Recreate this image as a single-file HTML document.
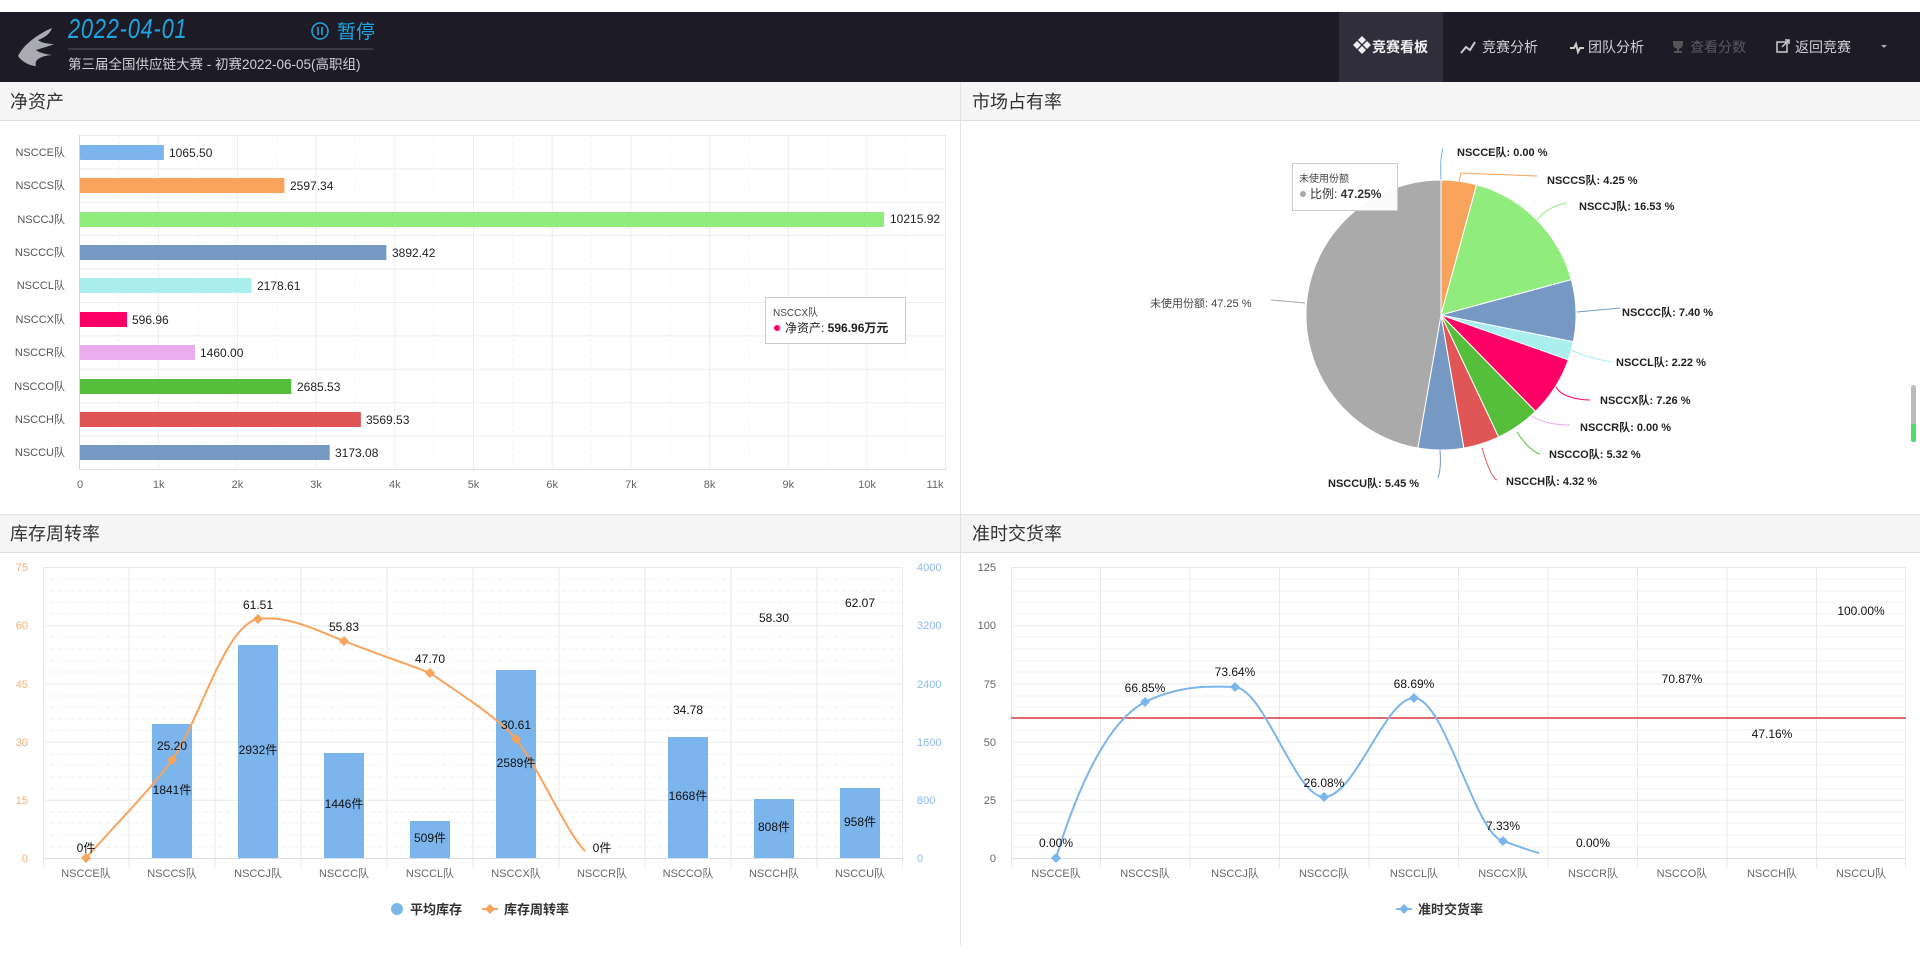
<!DOCTYPE html>
<html><head><meta charset="utf-8"><style>
html,body{margin:0;padding:0;width:1920px;height:960px;overflow:hidden;background:#fff;font-family:"Liberation Sans Narrow","Liberation Sans","Noto Sans CJK SC",sans-serif}
svg{position:absolute;left:0;top:0}
text{font-family:"Liberation Sans Narrow","Liberation Sans","Noto Sans CJK SC",sans-serif}
</style></head><body>
<svg width="1920" height="960" viewBox="0 0 1920 960" xmlns="http://www.w3.org/2000/svg">
<!-- header -->
<rect x="0" y="12" width="1920" height="70" fill="#1d1b26"/>
<path d="M52,28 C38,34 24,44 18,56 C22,62 30,66 36,66 C34,60 40,56 52,55 C44,54 38,52 36,50 C42,48 50,46 54,44 C46,44 40,42 38,40 C44,38 50,34 52,28Z" fill="#a9abb0"/>
<text x="68" y="38" font-size="28" font-style="italic" fill="#1ea5e0" transform="translate(68,0) scale(0.78,1) translate(-68,0)" letter-spacing="1">2022-04-01</text>
<circle cx="320" cy="31" r="8" fill="none" stroke="#1ea5e0" stroke-width="1.5"/>
<line x1="318" y1="27" x2="318" y2="35" stroke="#1ea5e0" stroke-width="1.5"/><line x1="322" y1="27" x2="322" y2="35" stroke="#1ea5e0" stroke-width="1.5"/>
<text x="337" y="38" font-size="19" fill="#1ea5e0">暂停</text>
<line x1="68" y1="49" x2="373" y2="49" stroke="#55545c" stroke-width="1"/>
<text x="68" y="69" font-size="13.5" fill="#cfcfd4">第三届全国供应链大赛 - 初赛2022-06-05(高职组)</text>
<rect x="1339" y="12" width="104" height="70" fill="#302e3a"/>
<g font-size="14" font-weight="bold">
<path d="M1358,41 l4,-4 l4,4 l-4,4z M1353,46 l4,-4 l4,4 l-4,4z M1363,46 l4,-4 l4,4 l-4,4z M1358,51 l4,-4 l4,4 l-4,4z" fill="#eee" transform="translate(0,-1) scale(1)"/>
<text x="1372" y="52" fill="#f2f2f2">竞赛看板</text>
<path d="M1461,53 l5,-6 l4,3 l5,-8" fill="none" stroke="#ccc" stroke-width="2"/>
<text x="1482" y="52" fill="#d0d0d4" font-weight="normal">竞赛分析</text>
<path d="M1570,48 l4,0 l2,-4 l2,8 l2,-4 l4,0" fill="none" stroke="#ccc" stroke-width="2"/>
<text x="1588" y="52" fill="#d0d0d4" font-weight="normal">团队分析</text>
<path d="M1673,41 h10 v3 a5,5 0 0 1 -10,0z M1677,48 h2 v3 h3 v2 h-8 v-2 h3z" fill="#555"/>
<text x="1690" y="52" fill="#5a5a60" font-weight="normal">查看分数</text>
<rect x="1777" y="42" width="10" height="10" fill="none" stroke="#ccc" stroke-width="1.5"/><path d="M1782,47 l7,-7 M1785,40 h4 v4" stroke="#ccc" stroke-width="1.5" fill="none"/>
<text x="1795" y="52" fill="#d0d0d4" font-weight="normal">返回竞赛</text>
<path d="M1881,45 h6 l-3,3z" fill="#aaa"/>
</g>
<!-- panel title bars -->
<rect x="0" y="82" width="1920" height="38" fill="#f5f5f5"/>
<line x1="0" y1="120.5" x2="1920" y2="120.5" stroke="#dcdcdc"/>
<rect x="0" y="514" width="1920" height="38" fill="#f5f5f5"/>
<line x1="0" y1="514.5" x2="1920" y2="514.5" stroke="#e2e2e2"/>
<line x1="0" y1="552.5" x2="1920" y2="552.5" stroke="#dcdcdc"/>
<line x1="960.5" y1="82" x2="960.5" y2="945" stroke="#e2e2e2"/>
<g font-size="18" fill="#333">
<text x="10" y="108">净资产</text><text x="972" y="108">市场占有率</text>
<text x="10" y="540">库存周转率</text><text x="972" y="540">准时交货率</text>
</g>
<!-- bar chart -->
<g stroke="#ececec" stroke-width="1">
<line x1="80" y1="135.5" x2="946" y2="135.5"/><line x1="80" y1="168.9" x2="946" y2="168.9"/><line x1="80" y1="202.3" x2="946" y2="202.3"/><line x1="80" y1="235.7" x2="946" y2="235.7"/><line x1="80" y1="269.1" x2="946" y2="269.1"/><line x1="80" y1="302.5" x2="946" y2="302.5"/><line x1="80" y1="335.9" x2="946" y2="335.9"/><line x1="80" y1="369.3" x2="946" y2="369.3"/><line x1="80" y1="402.7" x2="946" y2="402.7"/><line x1="80" y1="436.1" x2="946" y2="436.1"/>
<line x1="158.7" y1="135" x2="158.7" y2="469"/><line x1="237.4" y1="135" x2="237.4" y2="469"/><line x1="316.1" y1="135" x2="316.1" y2="469"/><line x1="394.8" y1="135" x2="394.8" y2="469"/><line x1="473.5" y1="135" x2="473.5" y2="469"/><line x1="552.2" y1="135" x2="552.2" y2="469"/><line x1="630.9" y1="135" x2="630.9" y2="469"/><line x1="709.6" y1="135" x2="709.6" y2="469"/><line x1="788.3" y1="135" x2="788.3" y2="469"/><line x1="867" y1="135" x2="867" y2="469"/><line x1="945.5" y1="135" x2="945.5" y2="469"/>
</g>
<g stroke="#f4f4f4" stroke-dasharray="3,3">
<line x1="119" y1="135" x2="119" y2="469"/><line x1="198" y1="135" x2="198" y2="469"/><line x1="277" y1="135" x2="277" y2="469"/><line x1="355" y1="135" x2="355" y2="469"/><line x1="434" y1="135" x2="434" y2="469"/><line x1="513" y1="135" x2="513" y2="469"/><line x1="591" y1="135" x2="591" y2="469"/><line x1="670" y1="135" x2="670" y2="469"/><line x1="749" y1="135" x2="749" y2="469"/><line x1="828" y1="135" x2="828" y2="469"/><line x1="906" y1="135" x2="906" y2="469"/>
</g>
<line x1="79.5" y1="135" x2="79.5" y2="470" stroke="#c8d8ee"/>
<line x1="79" y1="469.5" x2="946" y2="469.5" stroke="#dde"/>
<g>
<rect x="80" y="145" width="83.9" height="15" fill="#7cb5ec" rx="1"/>
<rect x="80" y="178" width="204.4" height="15" fill="#f7a35c"/>
<rect x="80" y="212" width="804" height="15" fill="#90ed7d"/>
<rect x="80" y="245" width="306.3" height="15" fill="#7599c2"/>
<rect x="80" y="278" width="171.5" height="15" fill="#abeeee"/>
<rect x="80" y="312" width="47" height="15" fill="#ff0066"/>
<rect x="80" y="345" width="114.9" height="15" fill="#eaacee"/>
<rect x="80" y="379" width="211.3" height="15" fill="#55bf3b"/>
<rect x="80" y="412" width="280.9" height="15" fill="#e05656"/>
<rect x="80" y="445" width="249.7" height="15" fill="#7599c2"/>
</g>
<g font-size="12" fill="#222">
<text x="169" y="157">1065.50</text><text x="290" y="190">2597.34</text><text x="890" y="223">10215.92</text><text x="392" y="257">3892.42</text><text x="257" y="290">2178.61</text><text x="132" y="324">596.96</text><text x="200" y="357">1460.00</text><text x="297" y="391">2685.53</text><text x="366" y="424">3569.53</text><text x="335" y="457">3173.08</text>
</g>
<g font-size="11" fill="#555" text-anchor="end">
<text x="65" y="156">NSCCE队</text><text x="65" y="189">NSCCS队</text><text x="65" y="223">NSCCJ队</text><text x="65" y="256">NSCCC队</text><text x="65" y="289">NSCCL队</text><text x="65" y="323">NSCCX队</text><text x="65" y="356">NSCCR队</text><text x="65" y="390">NSCCO队</text><text x="65" y="423">NSCCH队</text><text x="65" y="456">NSCCU队</text>
</g>
<g font-size="11" fill="#666" text-anchor="middle">
<text x="80" y="488">0</text><text x="158.7" y="488">1k</text><text x="237.4" y="488">2k</text><text x="316.1" y="488">3k</text><text x="394.8" y="488">4k</text><text x="473.5" y="488">5k</text><text x="552.2" y="488">6k</text><text x="630.9" y="488">7k</text><text x="709.6" y="488">8k</text><text x="788.3" y="488">9k</text><text x="867" y="488">10k</text><text x="935" y="488">11k</text>
</g>
<rect x="765.5" y="297.5" width="140" height="46" fill="#fff" fill-opacity="0.92" stroke="#ccc"/>
<text x="773" y="316" font-size="10" fill="#444">NSCCX队</text>
<circle cx="777" cy="328" r="3" fill="#ff0066"/>
<text x="785" y="332" font-size="12" fill="#222">净资产: <tspan font-weight="bold">596.96万元</tspan></text>
<!-- pie -->
<g stroke="#fff" stroke-width="1">
<path d="M1441,315 L1441,180 A135,135 0 0 1 1476.6,184.8Z" fill="#f7a35c"/>
<path d="M1441,315 L1476.6,184.8 A135,135 0 0 1 1571.3,279.6Z" fill="#90ed7d"/>
<path d="M1441,315 L1571.3,279.6 A135,135 0 0 1 1573.3,341.8Z" fill="#7599c2"/>
<path d="M1441,315 L1573.3,341.8 A135,135 0 0 1 1568.3,359.9Z" fill="#abeeee"/>
<path d="M1441,315 L1568.3,359.9 A135,135 0 0 1 1535.5,411.4Z" fill="#ff0066"/>
<path d="M1441,315 L1535.5,411.4 A135,135 0 0 1 1498.6,437.1Z" fill="#55bf3b"/>
<path d="M1441,315 L1498.6,437.1 A135,135 0 0 1 1463.8,448.1Z" fill="#e05656"/>
<path d="M1441,315 L1463.8,448.1 A135,135 0 0 1 1417.8,448Z" fill="#7599c2"/>
<path d="M1441,315 L1417.8,448 A135,135 0 0 1 1441,180Z" fill="#aaaaaa"/>
</g>
<g fill="none" stroke-width="1">
<path d="M1441,180 C1440,165 1441,155 1443,148" stroke="#7cb5ec"/>
<path d="M1459,182 L1461,173 L1537,176" stroke="#f7a35c"/>
<path d="M1537,220 C1545,210 1555,205 1567,203" stroke="#90ed7d"/>
<path d="M1577,312 L1620,308" stroke="#7599c2"/>
<path d="M1571,350 C1585,357 1600,360 1612,362" stroke="#abeeee"/>
<path d="M1556,387 C1560,395 1575,400 1590,400" stroke="#ff0066"/>
<path d="M1532,416 C1540,422 1555,425 1570,425" stroke="#eaacee"/>
<path d="M1517,432 C1525,445 1535,453 1540,454" stroke="#55bf3b"/>
<path d="M1482,448 C1487,465 1492,478 1497,480" stroke="#e05656"/>
<path d="M1440,450 C1441,462 1440,472 1438,478" stroke="#7599c2"/>
<path d="M1271,300 L1305,303" stroke="#aaa"/>
</g>
<g font-size="11" fill="#222" font-weight="bold">
<text x="1457" y="156">NSCCE队: 0.00 %</text>
<text x="1547" y="184">NSCCS队: 4.25 %</text>
<text x="1579" y="210">NSCCJ队: 16.53 %</text>
<text x="1622" y="316">NSCCC队: 7.40 %</text>
<text x="1616" y="366">NSCCL队: 2.22 %</text>
<text x="1600" y="404">NSCCX队: 7.26 %</text>
<text x="1580" y="431">NSCCR队: 0.00 %</text>
<text x="1549" y="458">NSCCO队: 5.32 %</text>
<text x="1506" y="485">NSCCH队: 4.32 %</text>
<text x="1328" y="487">NSCCU队: 5.45 %</text>
<text x="1150" y="307" font-weight="normal" fill="#444">未使用份额: 47.25 %</text>
</g>
<rect x="1292.5" y="163.5" width="105" height="47" fill="#fff" fill-opacity="0.94" stroke="#ccc"/>
<text x="1299" y="182" font-size="10" fill="#444">未使用份额</text>
<circle cx="1303" cy="194" r="3" fill="#aaa"/>
<text x="1310" y="198" font-size="12" fill="#333">比例: <tspan font-weight="bold">47.25%</tspan></text>
<rect x="1911" y="385" width="5" height="57" rx="2.5" fill="#bbb"/>
<rect x="1911" y="424" width="5" height="18" rx="2" fill="#49e06a"/>
<!-- bottom-left chart grid -->
<g stroke="#e9e9e9">
<line x1="43" y1="567.5" x2="903" y2="567.5"/><line x1="43" y1="625.7" x2="903" y2="625.7"/><line x1="43" y1="683.9" x2="903" y2="683.9"/><line x1="43" y1="742.1" x2="903" y2="742.1"/><line x1="43" y1="800.3" x2="903" y2="800.3"/>
<line x1="43.5" y1="567" x2="43.5" y2="868"/><line x1="129" y1="567" x2="129" y2="868"/><line x1="215" y1="567" x2="215" y2="868"/><line x1="301" y1="567" x2="301" y2="868"/><line x1="387" y1="567" x2="387" y2="868"/><line x1="473" y1="567" x2="473" y2="868"/><line x1="559" y1="567" x2="559" y2="868"/><line x1="645" y1="567" x2="645" y2="868"/><line x1="731" y1="567" x2="731" y2="868"/><line x1="817" y1="567" x2="817" y2="868"/><line x1="902.5" y1="567" x2="902.5" y2="868"/>
</g>
<g stroke="#f0f0f0" stroke-dasharray="4,3">
<line x1="43" y1="579" x2="903" y2="579"/><line x1="43" y1="591" x2="903" y2="591"/><line x1="43" y1="602" x2="903" y2="602"/><line x1="43" y1="614" x2="903" y2="614"/><line x1="43" y1="637" x2="903" y2="637"/><line x1="43" y1="649" x2="903" y2="649"/><line x1="43" y1="661" x2="903" y2="661"/><line x1="43" y1="672" x2="903" y2="672"/><line x1="43" y1="696" x2="903" y2="696"/><line x1="43" y1="707" x2="903" y2="707"/><line x1="43" y1="719" x2="903" y2="719"/><line x1="43" y1="730" x2="903" y2="730"/><line x1="43" y1="754" x2="903" y2="754"/><line x1="43" y1="765" x2="903" y2="765"/><line x1="43" y1="777" x2="903" y2="777"/><line x1="43" y1="789" x2="903" y2="789"/><line x1="43" y1="812" x2="903" y2="812"/><line x1="43" y1="823" x2="903" y2="823"/><line x1="43" y1="835" x2="903" y2="835"/><line x1="43" y1="847" x2="903" y2="847"/>
</g>
<line x1="43" y1="858.5" x2="903" y2="858.5" stroke="#d6dce8"/>
<g fill="#7cb5ec">
<rect x="152" y="724" width="40" height="134"/><rect x="238" y="645" width="40" height="213"/><rect x="324" y="753" width="40" height="105"/><rect x="410" y="821" width="40" height="37"/><rect x="496" y="670" width="40" height="188"/><rect x="668" y="737" width="40" height="121"/><rect x="754" y="799" width="40" height="59"/><rect x="840" y="788" width="40" height="70"/>
</g>
<path d="M86,858 C120,820 150,790 172,760 C200,720 225,625 258,619 C290,615 320,632 344,641 C380,655 410,665 430,673 C470,700 500,720 516,739 C540,770 565,830 585,851" fill="none" stroke="#f7a35c" stroke-width="2"/>
<g fill="#f7a35c"><path d="M86,853 l5,5 l-5,5 l-5,-5z"/><path d="M172,755 l5,5 l-5,5 l-5,-5z"/><path d="M258,614 l5,5 l-5,5 l-5,-5z"/><path d="M344,636 l5,5 l-5,5 l-5,-5z"/><path d="M430,668 l5,5 l-5,5 l-5,-5z"/><path d="M516,734 l5,5 l-5,5 l-5,-5z"/></g>
<g font-size="12" fill="#111" text-anchor="middle">
<text x="86" y="852">0件</text><text x="172" y="750">25.20</text><text x="258" y="609">61.51</text><text x="344" y="631">55.83</text><text x="430" y="663">47.70</text><text x="516" y="729">30.61</text><text x="602" y="852">0件</text><text x="688" y="714">34.78</text><text x="774" y="622">58.30</text><text x="860" y="607">62.07</text>
<text x="172" y="794">1841件</text><text x="258" y="754">2932件</text><text x="344" y="808">1446件</text><text x="430" y="842">509件</text><text x="516" y="767">2589件</text><text x="688" y="800">1668件</text><text x="774" y="831">808件</text><text x="860" y="826">958件</text>
</g>
<g font-size="11" fill="#f4b07a" text-anchor="end">
<text x="28" y="571">75</text><text x="28" y="629">60</text><text x="28" y="688">45</text><text x="28" y="746">30</text><text x="28" y="804">15</text><text x="28" y="862">0</text>
</g>
<g font-size="11" fill="#8cb8e8">
<text x="917" y="571">4000</text><text x="917" y="629">3200</text><text x="917" y="688">2400</text><text x="917" y="746">1600</text><text x="917" y="804">800</text><text x="917" y="862">0</text>
</g>
<g font-size="11" fill="#666" text-anchor="middle">
<text x="86" y="877">NSCCE队</text><text x="172" y="877">NSCCS队</text><text x="258" y="877">NSCCJ队</text><text x="344" y="877">NSCCC队</text><text x="430" y="877">NSCCL队</text><text x="516" y="877">NSCCX队</text><text x="602" y="877">NSCCR队</text><text x="688" y="877">NSCCO队</text><text x="774" y="877">NSCCH队</text><text x="860" y="877">NSCCU队</text>
</g>
<circle cx="397" cy="909" r="6" fill="#7cb5ec"/>
<text x="410" y="914" font-size="13" font-weight="bold" fill="#333">平均库存</text>
<line x1="482" y1="909" x2="498" y2="909" stroke="#f7a35c" stroke-width="2"/><path d="M490,904 l5,5 l-5,5 l-5,-5z" fill="#f7a35c"/>
<text x="504" y="914" font-size="13" font-weight="bold" fill="#333">库存周转率</text>
<!-- bottom-right chart -->
<g stroke="#e9e9e9">
<line x1="1011" y1="567.5" x2="1906" y2="567.5"/><line x1="1011" y1="625.7" x2="1906" y2="625.7"/><line x1="1011" y1="683.9" x2="1906" y2="683.9"/><line x1="1011" y1="742.1" x2="1906" y2="742.1"/><line x1="1011" y1="800.3" x2="1906" y2="800.3"/>
<line x1="1011.5" y1="567" x2="1011.5" y2="868"/><line x1="1100.5" y1="567" x2="1100.5" y2="868"/><line x1="1190" y1="567" x2="1190" y2="868"/><line x1="1279.5" y1="567" x2="1279.5" y2="868"/><line x1="1369" y1="567" x2="1369" y2="868"/><line x1="1458.5" y1="567" x2="1458.5" y2="868"/><line x1="1548" y1="567" x2="1548" y2="868"/><line x1="1637.5" y1="567" x2="1637.5" y2="868"/><line x1="1727" y1="567" x2="1727" y2="868"/><line x1="1816.5" y1="567" x2="1816.5" y2="868"/><line x1="1905.5" y1="567" x2="1905.5" y2="868"/>
</g>
<g stroke="#f0f0f0">
<line x1="1011" y1="579" x2="1906" y2="579"/><line x1="1011" y1="591" x2="1906" y2="591"/><line x1="1011" y1="602" x2="1906" y2="602"/><line x1="1011" y1="614" x2="1906" y2="614"/><line x1="1011" y1="637" x2="1906" y2="637"/><line x1="1011" y1="649" x2="1906" y2="649"/><line x1="1011" y1="661" x2="1906" y2="661"/><line x1="1011" y1="672" x2="1906" y2="672"/><line x1="1011" y1="696" x2="1906" y2="696"/><line x1="1011" y1="707" x2="1906" y2="707"/><line x1="1011" y1="730" x2="1906" y2="730"/><line x1="1011" y1="754" x2="1906" y2="754"/><line x1="1011" y1="765" x2="1906" y2="765"/><line x1="1011" y1="777" x2="1906" y2="777"/><line x1="1011" y1="789" x2="1906" y2="789"/><line x1="1011" y1="812" x2="1906" y2="812"/><line x1="1011" y1="823" x2="1906" y2="823"/><line x1="1011" y1="835" x2="1906" y2="835"/><line x1="1011" y1="847" x2="1906" y2="847"/>
</g>
<line x1="1011" y1="858.5" x2="1906" y2="858.5" stroke="#d6dce8"/>
<line x1="1011" y1="718" x2="1906" y2="718" stroke="#d9393d" stroke-width="1.5"/>
<path d="M1056,858 C1080,780 1110,720 1145,702 C1180,685 1210,686 1235,687 C1265,690 1295,797 1324,797 C1355,797 1385,698 1414,698 C1445,698 1475,835 1503,841 C1515,845 1530,851 1539,853" fill="none" stroke="#7cb5ec" stroke-width="2"/>
<g fill="#7cb5ec"><path d="M1056,853 l5,5 l-5,5 l-5,-5z"/><path d="M1145,697 l5,5 l-5,5 l-5,-5z"/><path d="M1235,682 l5,5 l-5,5 l-5,-5z"/><path d="M1324,792 l5,5 l-5,5 l-5,-5z"/><path d="M1414,693 l5,5 l-5,5 l-5,-5z"/><path d="M1503,836 l5,5 l-5,5 l-5,-5z"/></g>
<g font-size="12" fill="#111" text-anchor="middle">
<text x="1056" y="847">0.00%</text><text x="1145" y="692">66.85%</text><text x="1235" y="676">73.64%</text><text x="1324" y="787">26.08%</text><text x="1414" y="688">68.69%</text><text x="1503" y="830">7.33%</text><text x="1593" y="847">0.00%</text><text x="1682" y="683">70.87%</text><text x="1772" y="738">47.16%</text><text x="1861" y="615">100.00%</text>
</g>
<g font-size="11" fill="#666" text-anchor="end">
<text x="996" y="571">125</text><text x="996" y="629">100</text><text x="996" y="688">75</text><text x="996" y="746">50</text><text x="996" y="804">25</text><text x="996" y="862">0</text>
</g>
<g font-size="11" fill="#666" text-anchor="middle">
<text x="1056" y="877">NSCCE队</text><text x="1145" y="877">NSCCS队</text><text x="1235" y="877">NSCCJ队</text><text x="1324" y="877">NSCCC队</text><text x="1414" y="877">NSCCL队</text><text x="1503" y="877">NSCCX队</text><text x="1593" y="877">NSCCR队</text><text x="1682" y="877">NSCCO队</text><text x="1772" y="877">NSCCH队</text><text x="1861" y="877">NSCCU队</text>
</g>
<line x1="1396" y1="909" x2="1412" y2="909" stroke="#7cb5ec" stroke-width="2"/><path d="M1404,904 l5,5 l-5,5 l-5,-5z" fill="#7cb5ec"/>
<text x="1418" y="914" font-size="13" font-weight="bold" fill="#333">准时交货率</text>
</svg>
</body></html>
